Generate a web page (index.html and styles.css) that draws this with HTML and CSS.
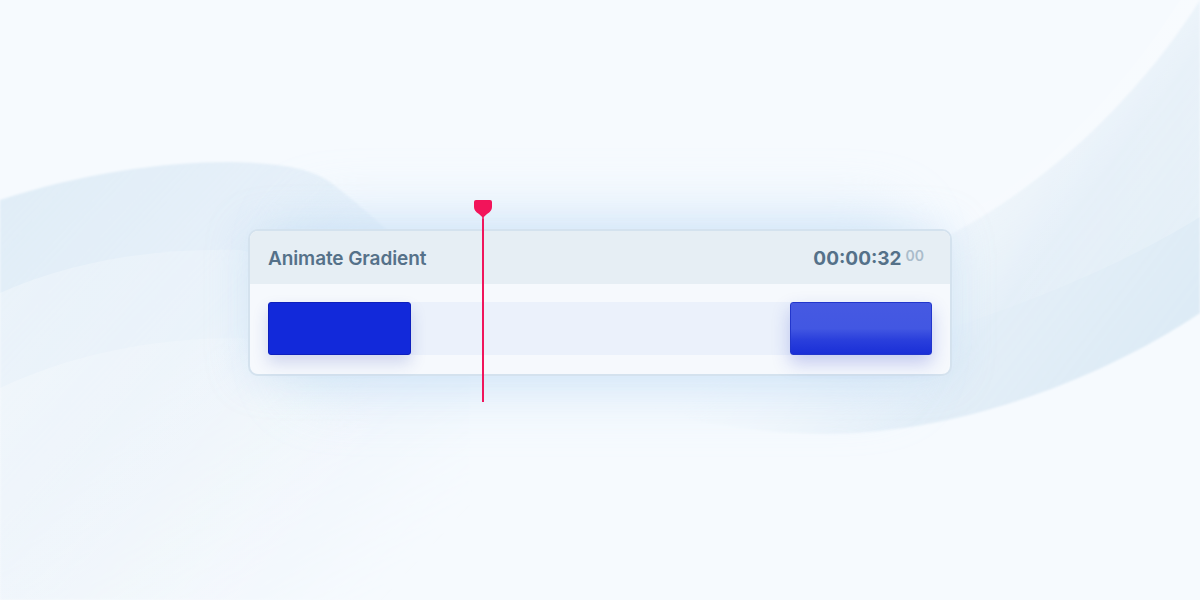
FILE: index.html
```html
<!DOCTYPE html>
<html>
<head>
<meta charset="utf-8">
<link rel="stylesheet" href="styles.css">
</head>
<body>
<svg class="bg" width="1200" height="600" viewBox="0 0 1200 600" aria-hidden="true">
  <defs>
    <filter id="soft" x="-10%" y="-10%" width="120%" height="120%"><feGaussianBlur stdDeviation="0.8"/></filter>
    <filter id="glow" x="-30%" y="-60%" width="160%" height="220%"><feGaussianBlur stdDeviation="28"/></filter>
    <linearGradient id="lg" x1="0" y1="170" x2="420" y2="560" gradientUnits="userSpaceOnUse">
      <stop offset="0" stop-color="#e0edf7" stop-opacity="1"/>
      <stop offset="0.45" stop-color="#e3eef8" stop-opacity="0.8"/>
      <stop offset="1" stop-color="#eef5fb" stop-opacity="0"/>
    </linearGradient>
    <linearGradient id="lg2" x1="0" y1="250" x2="380" y2="520" gradientUnits="userSpaceOnUse">
      <stop offset="0" stop-color="#ffffff" stop-opacity="0.3"/>
      <stop offset="1" stop-color="#ffffff" stop-opacity="0"/>
    </linearGradient>
    <linearGradient id="rg" x1="1200" y1="400" x2="860" y2="140" gradientUnits="userSpaceOnUse">
      <stop offset="0" stop-color="#dbeaf5" stop-opacity="1"/>
      <stop offset="0.5" stop-color="#e1edf7" stop-opacity="0.9"/>
      <stop offset="1" stop-color="#f3f8fc" stop-opacity="0"/>
    </linearGradient>
    <linearGradient id="rg2" x1="1200" y1="300" x2="880" y2="300" gradientUnits="userSpaceOnUse">
      <stop offset="0" stop-color="#ffffff" stop-opacity="0.2"/>
      <stop offset="1" stop-color="#ffffff" stop-opacity="0"/>
    </linearGradient>
  </defs>
  <path d="M0 200 C 80 174, 160 162, 230 162 C 280 163, 310 168, 330 182 C 380 220, 420 262, 470 310 L 470 600 L 0 600 Z" fill="url(#lg)" filter="url(#soft)"/>
  <path d="M0 293 C 70 262, 150 248, 240 250 L 470 300 L 470 600 L 0 600 Z" fill="url(#lg2)"/>
  <path d="M0 388 C 70 355, 150 338, 240 338 L 470 360 L 470 600 L 0 600 Z" fill="url(#lg2)"/>
  <path d="M640 407 C 700 425, 760 433, 830 434 C 960 432, 1100 380, 1200 313 L 1200 0 C 1150 80, 1060 180, 940 240 C 850 280, 720 330, 640 380 Z" fill="url(#rg)" filter="url(#soft)"/>
  <path d="M870 245 C 1000 200, 1120 150, 1200 90 L 1200 0 L 1180 0 C 1130 80, 1050 170, 940 235 Z" fill="url(#rg2)"/>
  <path d="M930 335 C 1040 300, 1130 260, 1200 217 L 1200 90 C 1120 150, 1000 200, 870 245 Z" fill="url(#rg2)"/>
  <rect x="290" y="210" width="620" height="185" rx="40" fill="#cfe4f8" opacity="0.55" filter="url(#glow)"/>
</svg>
<main class="stage">
  <section class="card">
    <header class="card-head">
      <span class="title">Animate Gradient</span>
      <span class="time">00:00:32<span class="frames">00</span></span>
    </header>
    <div class="card-body">
      <div class="track">
        <div class="key key-start"></div>
        <div class="key key-end"></div>
      </div>
    </div>
    <div class="playhead">
      <svg class="playhead-head" width="18" height="19" viewBox="0 0 18 19"><path d="M2 0 H16 Q18 0 18 2 V7 Q18 11 13 14 L9.8 17 V19 H8.2 V17 L5 14 Q0 11 0 7 V2 Q0 0 2 0 Z" fill="#f2145a"/></svg>
      <div class="playhead-line"></div>
    </div>
  </section>
</main>
</body>
</html>
```

FILE: styles.css
```css
html, body {
  margin: 0;
  padding: 0;
}
body {
  width: 1200px;
  height: 600px;
  overflow: hidden;
  background: #f6fafe;
  font-family: Inter, "Noto Sans", "Liberation Sans", sans-serif;
  position: relative;
}
.bg {
  position: absolute;
  left: 0;
  top: 0;
}
.stage {
  position: relative;
  display: flex;
  justify-content: center;
  padding-top: 229px;
}
.card {
  position: relative;
  width: 700px;
  border: 2px solid #d4e2ee;
  border-radius: 10px;
  background: #f6f9fd;
  box-shadow: 0 0 40px rgba(170, 205, 240, 0.35);
}
.card-head {
  height: 53px;
  display: flex;
  align-items: center;
  justify-content: space-between;
  padding: 0 26px 0 18px;
  background: #e6eef4;
  border-radius: 8px 8px 0 0;
}
.title {
  font-size: 19px;
  font-weight: 600;
  color: #557189;
  letter-spacing: -0.1px;
  padding-top: 2px;
}
.time {
  font-size: 19px;
  font-weight: 700;
  color: #557189;
  display: flex;
  align-items: flex-start;
  padding-top: 2px;
}
.frames {
  font-size: 14px;
  font-weight: 600;
  color: #aabccb;
  margin-left: 4px;
}
.card-body {
  padding: 18px 18px 19px;
}
.track {
  height: 53px;
  background: #ebf1fb;
  display: flex;
  justify-content: space-between;
}
.key {
  width: 143px;
  height: 53px;
  border-radius: 3px;
  box-sizing: border-box;
}
.key-start {
  background: #1229da;
  border: 1px solid #0e20bd;
  box-shadow: 0 8px 16px rgba(40, 60, 170, 0.18);
}
.key-end {
  width: 142px;
  background: linear-gradient(#4659e2 0%, #4257e2 50%, #2a3fdc 72%, #1a2fd7 100%);
  border: 1px solid #2236cc;
  box-shadow: 0 8px 18px rgba(40, 60, 200, 0.25);
}
.playhead {
  position: absolute;
  left: 224px;
  top: -31px;
  width: 18px;
  display: flex;
  flex-direction: column;
  align-items: center;
}
.playhead-head {
  display: block;
}
.playhead-line {
  width: 2px;
  height: 183px;
  background: #f0155b;
}
```
